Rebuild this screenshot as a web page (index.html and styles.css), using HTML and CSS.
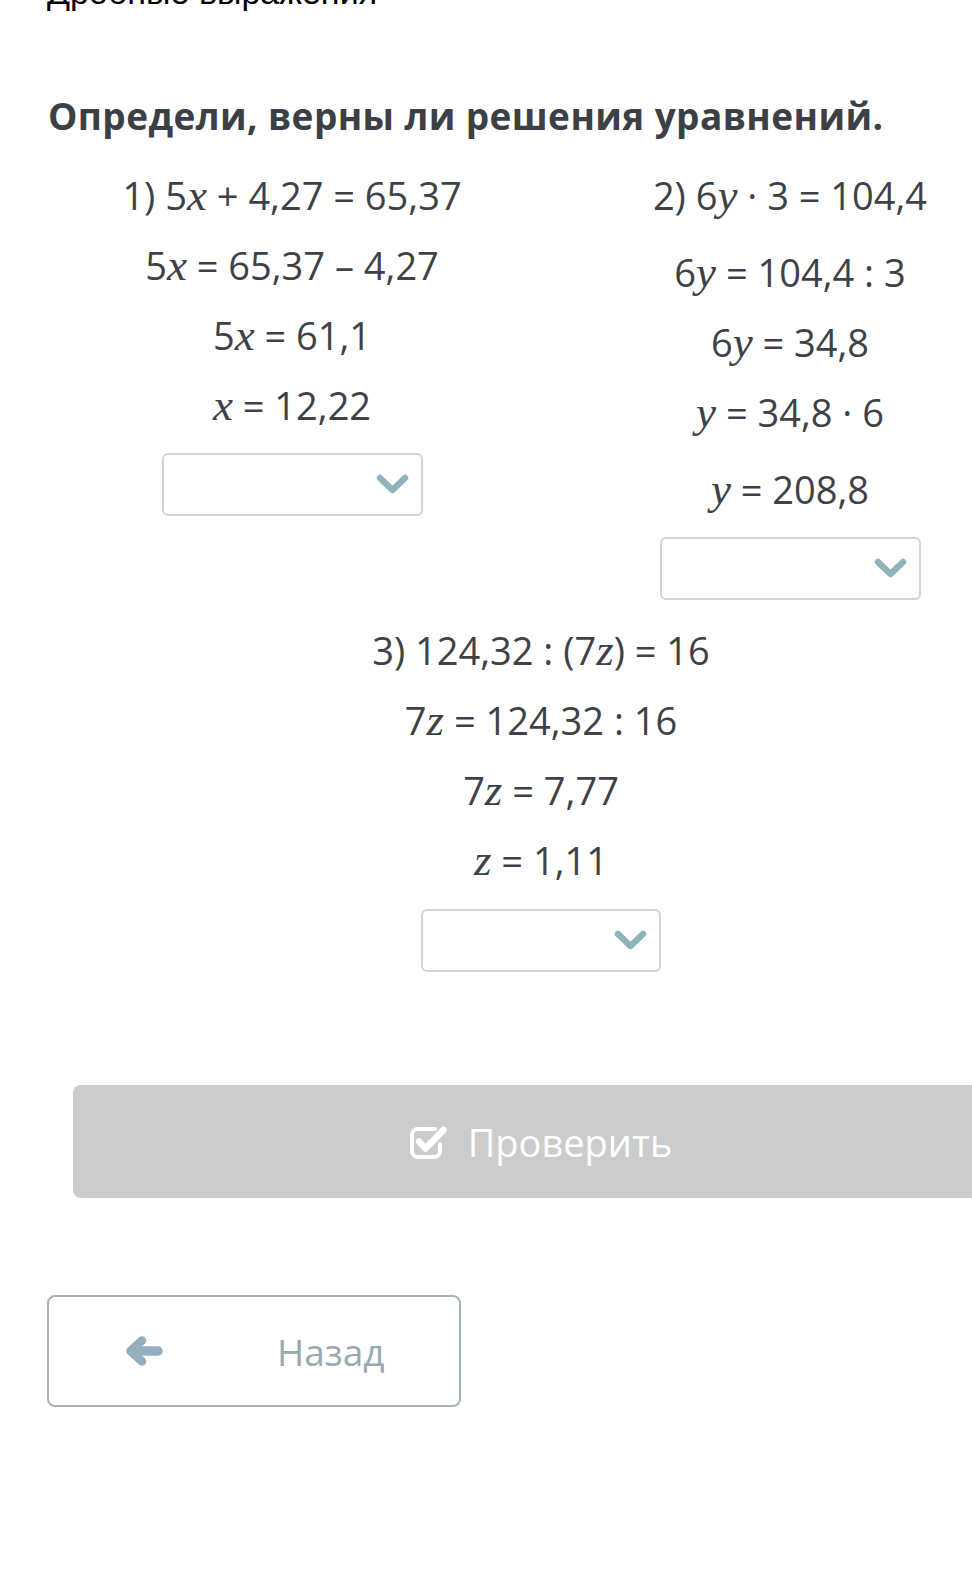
FILE: index.html
```html
<!DOCTYPE html>
<html lang="ru">
<head>
<meta charset="utf-8">
<title>Определи, верны ли решения уравнений</title>
<link rel="stylesheet" href="styles.css">
</head>
<body>
<div class="crumb"><span>Дробные выражения</span></div>
<h1 class="title">Определи, верны ли решения уравнений.</h1>
<div class="task">
  <div class="pair">
    <div class="col">
      <p class="eq">1) 5<span class="v">x</span> + 4,27 = 65,37</p>
      <p class="eq">5<span class="v">x</span> = 65,37 – 4,27</p>
      <p class="eq">5<span class="v">x</span> = 61,1</p>
      <p class="eq"><span class="v">x</span> = 12,22</p>
      <div class="select">
        <svg class="chev" width="33" height="21" viewBox="0 0 33 21"><polyline points="4,4 16.5,16 29,4" fill="none" stroke="#8fb3ba" stroke-width="6.5" stroke-linecap="round" stroke-linejoin="round"/></svg>
      </div>
    </div>
    <div class="col">
      <p class="eq">2) 6<span class="v">y</span> · 3 = 104,4</p>
      <p class="eq sp">6<span class="v">y</span> = 104,4 : 3</p>
      <p class="eq">6<span class="v">y</span> = 34,8</p>
      <p class="eq"><span class="v">y</span> = 34,8 · 6</p>
      <p class="eq sp"><span class="v">y</span> = 208,8</p>
      <div class="select">
        <svg class="chev" width="33" height="21" viewBox="0 0 33 21"><polyline points="4,4 16.5,16 29,4" fill="none" stroke="#8fb3ba" stroke-width="6.5" stroke-linecap="round" stroke-linejoin="round"/></svg>
      </div>
    </div>
  </div>
  <div class="col single">
    <p class="eq">3) 124,32 : (7<span class="v">z</span>) = 16</p>
    <p class="eq">7<span class="v">z</span> = 124,32 : 16</p>
    <p class="eq">7<span class="v">z</span> = 7,77</p>
    <p class="eq"><span class="v">z</span> = 1,11</p>
    <div class="select narrow">
      <svg class="chev" width="33" height="21" viewBox="0 0 33 21"><polyline points="4,4 16.5,16 29,4" fill="none" stroke="#8fb3ba" stroke-width="6.5" stroke-linecap="round" stroke-linejoin="round"/></svg>
    </div>
  </div>
  <div class="check">
    <svg class="check-icon" width="38" height="34" viewBox="0 0 38 34">
      <path d="M25 4 H8 a6 6 0 0 0 -6 6 V26 a6 6 0 0 0 6 6 H24 a6 6 0 0 0 6 -6 V19" fill="none" stroke="#fff" stroke-width="4" stroke-linecap="round"/>
      <polyline points="9,16.5 15.5,23.5 33.5,5" fill="none" stroke="#fff" stroke-width="6.5" stroke-linecap="round" stroke-linejoin="round"/>
    </svg>
    <span>Проверить</span>
  </div>
  <div class="back">
    <svg class="arrow" width="38" height="32" viewBox="0 0 38 32">
      <polyline points="17,5.5 5.5,16 17,26.5" fill="none" stroke="#94aec0" stroke-width="8.5" stroke-linecap="round" stroke-linejoin="round"/>
      <line x1="8" y1="16" x2="33" y2="16" stroke="#94aec0" stroke-width="9.5" stroke-linecap="round"/>
    </svg>
    <span>Назад</span>
  </div>
</div>
</body>
</html>
```
FILE: styles.css
```css
html, body {
  margin: 0;
  padding: 0;
  background: #ffffff;
  overflow-x: hidden;
}

.crumb {
  height: 12px;
  overflow: hidden;
  padding-left: 47px;
}

.crumb span {
  display: block;
  margin-top: -28px;
  font-family: "Liberation Sans", Arial, sans-serif;
  font-size: 34px;
  line-height: 40px;
  color: #000;
}

.title {
  margin: 80px 0 0 48px;
  font-family: "Open Sans", sans-serif;
  font-weight: 700;
  font-size: 37px;
  letter-spacing: 0.4px;
  line-height: 48px;
  color: #3b4047;
  white-space: nowrap;
}

.task {
  margin-left: 43px;
  width: 996px;
  padding-top: 20px;
}

.pair {
  display: grid;
  grid-template-columns: 1fr 1fr;
}

.col {
  display: flex;
  flex-direction: column;
  align-items: center;
}

.single {
  margin-top: 15px;
}

.eq {
  margin: 0;
  font-family: "Open Sans", sans-serif;
  font-size: 38px;
  line-height: 70px;
  color: #3e4247;
  white-space: nowrap;
}

.eq.sp {
  margin-top: 7px;
}

.v {
  font-family: "Liberation Serif", "Times New Roman", serif;
  font-style: italic;
  font-size: 45px;
  line-height: 1;
}

.select {
  margin-top: 13px;
  box-sizing: border-box;
  width: 261px;
  height: 63px;
  border: 2px solid #cfd6d6;
  border-radius: 6px;
  background: #fff;
  display: flex;
  align-items: center;
  justify-content: flex-end;
  padding-right: 12px;
}

.select.narrow {
  width: 240px;
  margin-top: 14px;
}

.check {
  margin: 113px 30px 0 30px;
  height: 113px;
  border-radius: 8px;
  background: #cccccc;
  display: flex;
  align-items: center;
  justify-content: center;
  gap: 20px;
  color: #fff;
  font-family: "Open Sans", sans-serif;
  font-size: 38px;
}

.back {
  margin: 97px 0 0 4px;
  box-sizing: border-box;
  width: 414px;
  height: 112px;
  border: 2px solid #a9b2b5;
  border-radius: 8px;
  background: #fff;
  display: flex;
  align-items: center;
  padding-left: 76px;
  font-family: "Open Sans", sans-serif;
  font-size: 37px;
  color: #9aa9b0;
}

.back span {
  margin-left: 114px;
}
```
